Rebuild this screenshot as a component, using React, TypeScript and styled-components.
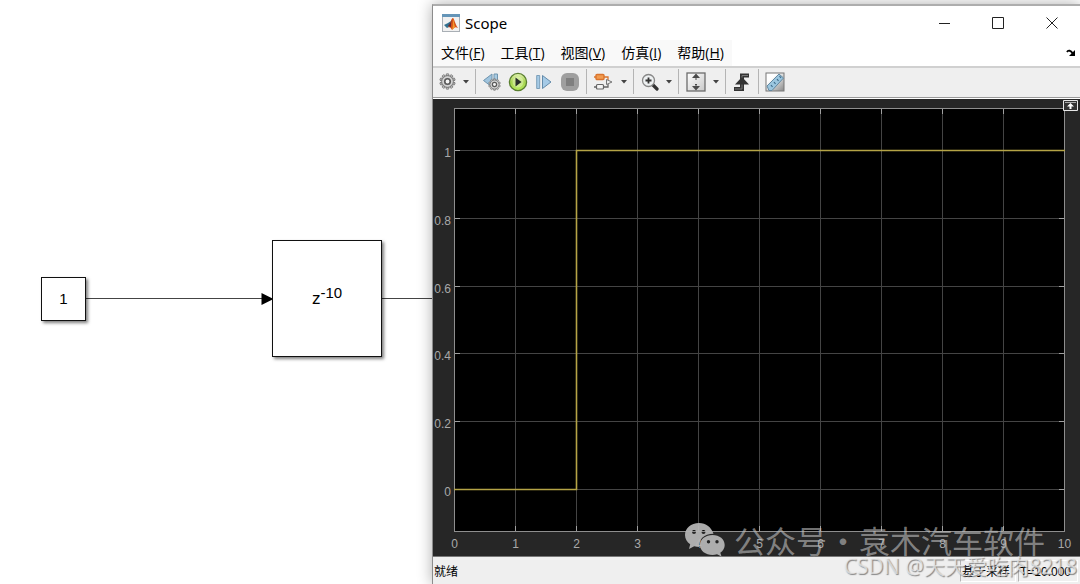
import React from 'react';
import styled, { createGlobalStyle } from 'styled-components';

const uiFont = '"Noto Sans", "Noto Sans CJK SC", sans-serif';
const cjkFont = '"Noto Sans CJK SC", "Noto Sans", sans-serif';

const GlobalStyle = createGlobalStyle`
  * { box-sizing: border-box; }
  body { margin: 0; background: #fff; font-family: ${cjkFont}; color: #000; }
  button { font: inherit; color: inherit; border: 0; padding: 0; background: none; }
`;

const Desktop = styled.main`
  position: relative;
  min-height: 100vh;
  overflow: hidden;
`;

const Block = styled.div<{ $x: number; $y: number; $w: number; $h: number }>`
  position: absolute;
  left: ${p => p.$x}px;
  top: ${p => p.$y}px;
  width: ${p => p.$w}px;
  height: ${p => p.$h}px;
  display: flex;
  align-items: center;
  justify-content: center;
  background: #fff;
  border: 1px solid #111;
  box-shadow: 2px 2px 3px rgba(0, 0, 0, 0.5);
  font: 15px/20px "Liberation Sans", Arial, sans-serif;
`;

const Formula = styled.span`
  font-size: 17px;
  sup { font-size: 15px; line-height: 0; vertical-align: 6px; }
`;

const Wires = styled.svg`
  position: absolute;
  left: 0;
  top: 290px;
`;

const Window = styled.section`
  position: absolute;
  left: 432px;
  right: 0;
  top: 4px;
  min-height: calc(100vh - 4px);
  display: flex;
  flex-direction: column;
  background: #efefef;
  border-left: 1px solid #8c8c8c;
  border-top: 2px solid #adadad;
  box-shadow: 0 0 14px rgba(0, 0, 0, 0.32);
`;

const TitleBar = styled.header`
  display: flex;
  align-items: center;
  height: 34px;
  padding: 0 1px 0 9px;
  background: #fff;
`;

const Title = styled.h1`
  flex: 1;
  margin: 0 0 0 5px;
  font: 400 15px/20px ${uiFont};
`;

const Caption = styled.button`
  width: 54px;
  height: 32px;
  display: grid;
  place-items: center;
`;

const MenuBar = styled.nav`
  display: flex;
  align-items: center;
  justify-content: space-between;
  height: 26px;
  background: #fff;
  padding-right: 4px;
`;

const MenuList = styled.div`
  display: flex;
  align-items: center;
  gap: 16px;
  height: 26px;
  padding: 0 8px;
  background: #f9f9f9;
`;

const MenuButton = styled.button`
  font: 14px/20px "Open Sans", ${cjkFont};
  white-space: nowrap;
`;

const DockButton = styled.button`
  display: grid;
  place-items: center;
  height: 20px;
`;

const Toolbar = styled.div`
  display: flex;
  align-items: center;
  height: 32px;
  padding: 0 0 2px 4px;
  background: #efefef;
  border-top: 2px solid #d0d0d0;
  border-bottom: 1px solid #999;
`;

const Tool = styled.button<{ $w: number }>`
  width: ${p => p.$w}px;
  height: 26px;
  display: grid;
  place-items: center;
`;

const Separator = styled.span<{ $gap?: number }>`
  width: 1px;
  height: 25px;
  margin-left: ${p => p.$gap ?? 0}px;
  background: #b4b4b4;
`;

const ChartArea = styled.div`
  position: relative;
  background: #262626;
  border-top: 1px solid #fff;
  border-bottom: 1px solid #777;
`;

const Chart = styled.svg`
  display: block;
  width: 100%;
  height: auto;
  text { fill: #a9a9a9; font: 12px "Liberation Sans", Arial, sans-serif; }
`;

const AxesButton = styled.button`
  position: absolute;
  top: 1px;
  right: 2px;
  display: flex;
`;

const StatusBar = styled.footer`
  flex: 1;
  display: flex;
  align-items: center;
  justify-content: space-between;
  min-height: 27px;
  padding: 0 2px 0 1px;
  font: 12px/16px ${cjkFont};
`;

const StatusCells = styled.div`
  display: flex;
  gap: 2px;
`;

const StatusCell = styled.span<{ $w: number }>`
  width: ${p => p.$w}px;
  height: 22px;
  padding: 2px 1px;
  border: 1px solid #fff;
  border-left-color: #b4b4b4;
  white-space: nowrap;
`;

const Sampled = styled.span`
  font: 12px/16px "Liberation Sans", sans-serif;
`;

const ChannelMark = styled.div`
  position: absolute;
  right: 35px;
  bottom: 22px;
  display: flex;
  align-items: center;
  gap: 9px;
  color: rgba(190, 190, 190, 0.62);
  font: 400 31px/44px ${cjkFont};
  white-space: nowrap;
  pointer-events: none;
`;

const ChannelText = styled.span`
  display: flex;
  span { width: 32px; text-align: center; }
`;

const AuthorMark = styled.div`
  position: absolute;
  right: 3px;
  bottom: 5px;
  color: rgba(240, 240, 240, 0.7);
  font: 21px/26px ${uiFont};
  text-shadow: 1px 1px 1px rgba(90, 90, 90, 0.7);
  white-space: nowrap;
  pointer-events: none;
`;

const Arrow = () => (
  <svg width="6" height="4" viewBox="0 0 6 4"><path d="M0 0h6L3 3.5z" fill="#444" /></svg>
);

const Matlab = () => (
  <svg width="18" height="18" viewBox="0 0 18 18">
    <rect x=".5" y=".5" width="17" height="17" fill="#f1f1f1" stroke="#a9afb5" />
    <path d="M0 0h18v3H0z" fill="#6595b8" />
    <path d="M2 11l4-2 3-2-2 6-2 1z" fill="#32708f" />
    <path d="M6 13c2-1 3-9 5-9 1 0 2 6 5 10-2-1-3-1-4 0l-2 2c-1-2-2-3-4-3z" fill="#d85218" />
    <path d="M6 12c2-2 3-5 4-7-1 3-1 6-1 8z" fill="#642b35" />
    <path d="M11 5c1 3 1 5 2 8l-3 3c1-3 1-7 1-11z" fill="#f29a2f" />
  </svg>
);

const gearTeeth = Array.from({ length: 10 }, (_, i) => i * 36);

const GearShape = () => (
  <g>
    {gearTeeth.map(a => (
      <path key={a} d="M-1.6-6.2l.5-1.9h2.2l.5 1.9z" transform={`rotate(${a})`} fill="#ccc" stroke="#777" strokeWidth=".9" />
    ))}
    <circle r="6" fill="#c4c4c4" stroke="#777" />
    <circle r="4.900" fill="none" stroke="#e4e4e4" strokeWidth=".8" />
    <circle r="2.900" fill="#f4f4f4" stroke="#5a5a5a" strokeWidth="1.700" />
  </g>
);

const Gear = () => <svg width="17" height="17" viewBox="-9 -9 18 18"><GearShape /></svg>;

const StepBack = () => (
  <svg width="20" height="18" viewBox="0 0 20 18">
    <path d="M10 1v13L1.500 7.500z" fill="#9fc4de" stroke="#6f95af" />
    <path d="M12 1h3.500v9H12z" fill="#a9cbe2" stroke="#6f95af" />
    <g transform="translate(12.500 11.500) scale(.72)"><GearShape /></g>
  </svg>
);

const Run = () => (
  <svg width="20" height="20" viewBox="0 0 20 20">
    <defs>
      <linearGradient id="run" x1="0" y1="0" x2="0" y2="1">
        <stop offset="0" stopColor="#e5f3b4" /><stop offset=".5" stopColor="#a5d44f" /><stop offset="1" stopColor="#b8ec5e" />
      </linearGradient>
    </defs>
    <circle cx="10" cy="10" r="8.600" fill="url(#run)" stroke="#5a7f30" strokeWidth="1.300" />
    <circle cx="10" cy="10" r="5.500" fill="#e5f6bb" opacity=".55" />
    <path d="M7.500 5.500v9l6-4.500z" fill="#292e2b" />
  </svg>
);

const StepForward = () => (
  <svg width="16" height="16" viewBox="0 0 16 16">
    <path d="M.700 1.500h3v13h-3z" fill="#a5cae6" stroke="#7c9fb9" />
    <path d="M6.500 1.500v13l8.500-6.500z" fill="#a5cae6" stroke="#638baa" />
  </svg>
);

const Stop = () => (
  <svg width="18" height="18" viewBox="0 0 18 18">
    <rect width="18" height="18" rx="6" fill="#9f9f9f" />
    <rect x="5" y="5" width="8" height="8" fill="#7f7f7f" />
  </svg>
);

const Highlight = () => (
  <svg width="20" height="18" viewBox="0 0 20 18">
    <rect x="2" y="1.500" width="8" height="5" rx="1" fill="#f29c50" stroke="#d9742e" strokeWidth="1.400" />
    <path d="M0 4h2M10 4h4v3" fill="none" stroke="#d9742e" strokeWidth="1.300" />
    <path d="M0 14h2m8 0h4v-3" fill="none" stroke="#666" strokeWidth="1.300" />
    <rect x="2.500" y="11.500" width="7" height="4.500" rx="1" fill="#f4f4f4" stroke="#666" strokeWidth="1.200" />
    <path d="M12.500 6.500l5.500 2.500-5.500 2.500z" fill="#eee" stroke="#777" />
  </svg>
);

const Zoom = () => (
  <svg width="18" height="18" viewBox="0 0 18 18">
    <path d="M11.500 11.500l4.500 4.500" stroke="#333" strokeWidth="3.200" strokeLinecap="round" />
    <circle cx="7.500" cy="7.500" r="6" fill="#eef1f2" stroke="#888" strokeWidth="1.300" />
    <path d="M4.500 7.500h6m-3-3v6" stroke="#333" strokeWidth="1.800" />
  </svg>
);

const Fit = () => (
  <svg width="20" height="20" viewBox="0 0 20 20">
    <defs><linearGradient id="fit" x1="0" y1="0" x2="1" y2="1"><stop offset="0" stopColor="#fff" /><stop offset="1" stopColor="#c9c9c9" /></linearGradient></defs>
    <rect x="1" y="1" width="18" height="18" fill="url(#fit)" stroke="#6c6c6c" strokeWidth="1.300" />
    <path d="M10 1.500L6 6h8zM10 18.500L6 14h8z" fill="#4a4a4a" />
    <path d="M10 5v3m0 4v3" stroke="#4a4a4a" strokeWidth="2" strokeDasharray="1.500 1" />
  </svg>
);

const Trigger = () => (
  <svg width="18" height="20" viewBox="0 0 18 20">
    <path d="M1 17h8V3.500h7" fill="none" stroke="#333" strokeWidth="4" />
    <path d="M2 17h7V3.500h6" fill="none" stroke="#777" strokeWidth="1" />
    <path d="M9 5l7 7.500H2z" fill="#333" />
  </svg>
);

const Ruler = () => (
  <svg width="20" height="20" viewBox="0 0 20 20">
    <defs><linearGradient id="page" x1="0" y1="0" x2="1" y2="1"><stop offset=".3" stopColor="#fff" /><stop offset="1" stopColor="#888" /></linearGradient></defs>
    <rect x="1" y="1" width="18" height="18" fill="url(#page)" stroke="#777" />
    <path d="M2 14L14 2l4.500 4L7 18.500H4z" fill="#9bc6df" stroke="#6388a0" />
    <path d="M7.500 15L6 13M10.500 12L9 10M13.500 9L12 7M16 6l-1.500-2" stroke="#3f6d8c" strokeWidth="1.200" />
  </svg>
);

const WeChat = () => (
  <svg width="41" height="34" viewBox="0 0 41 34">
    <path fillRule="evenodd" fill="#b4b4b4" fillOpacity=".95" d="M15 0C7 0 1 5.200 1 12c0 3.700 2 7 5.200 9.300L5 26l5.200-2.800c1.700.500 3.300.700 5 .700C14.500 16.500 20 11 29.500 10.800 27.500 4.500 22 0 15 0zM10 7a2 2 0 110 4 2 2 0 010-4zm9.500 0a2 2 0 110 4 2 2 0 010-4z" />
    <path fillRule="evenodd" fill="#b4b4b4" fillOpacity=".95" d="M28.500 12C21.500 12 16 16.300 16 22s5.500 10 12.500 10c1.600 0 3.100-.200 4.500-.700l4.500 2.200-1.200-3.700c2.800-1.900 4.400-4.700 4.400-7.800 0-5.700-5.200-10-12.200-10zM24.500 17a1.700 1.700 0 110 3.400 1.700 1.700 0 010-3.400zm8.500 0a1.700 1.700 0 110 3.400 1.700 1.700 0 010-3.400z" />
  </svg>
);

const menus = [
  ['文件', 'F'], ['工具', 'T'], ['视图', 'V'], ['仿真', 'I'], ['帮助', 'H'],
];

const xTicks = Array.from({ length: 11 }, (_, i) => i);
const yTicks = [0, 0.2, 0.4, 0.6, 0.8, 1];
const px = (v: number) => Math.round(21 + v * 61) + 0.5;
const py = (v: number) => Math.round(390 - v * 339) + 0.5;

const ScopeChart = () => (
  <Chart viewBox="0 0 647 457" role="img" aria-label="Scope">
    <rect x="21" y="9" width="611" height="424" fill="#000" />
    {xTicks.map(v => (
      <g key={v}>
        <path d={`M${px(v)} 9V433`} stroke="#444" />
        <path d={`M${px(v)} 9v6M${px(v)} 433v-6`} stroke="#a0a0a0" />
        <text x={px(v)} y="449" textAnchor="middle">{v}</text>
      </g>
    ))}
    {yTicks.map(v => (
      <g key={v}>
        <path d={`M21 ${py(v)}H632`} stroke="#444" />
        <path d={`M21 ${py(v)}h6M632 ${py(v)}h-6`} stroke="#a0a0a0" />
        <text x="18" y={py(v) + 6} textAnchor="end">{v}</text>
      </g>
    ))}
    <rect x="21.500" y="9.500" width="610" height="423" fill="none" stroke="#8e8e8e" />
    <path d={`M21 ${py(0)}H${px(2)}V${py(1)}H632`} fill="none" stroke="#b5a446" strokeWidth="1.600" />
  </Chart>
);

export default function App() {
  return (
    <Desktop>
      <GlobalStyle />
      <Wires width="440" height="18" viewBox="0 0 440 18">
        <path d="M86 8.500H262M382 8.500H440" stroke="#444" />
        <path d="M261.500 3v12l12-6z" fill="#000" />
      </Wires>
      <Block $x={41} $y={277} $w={45} $h={44}>1</Block>
      <Block $x={272} $y={240} $w={110} $h={117}><Formula>z<sup>-10</sup></Formula></Block>

      <Window>
        <TitleBar>
          <Matlab />
          <Title>Scope</Title>
          <Caption aria-label="Minimize"><svg width="11" height="11"><path d="M0 5.500h11" stroke="#222" /></svg></Caption>
          <Caption aria-label="Maximize"><svg width="12" height="12"><path d="M.5.5h11v11H.5z" fill="none" stroke="#222" /></svg></Caption>
          <Caption aria-label="Close"><svg width="12" height="12"><path d="M.5.5l11 11m0-11l-11 11" stroke="#222" /></svg></Caption>
        </TitleBar>
        <MenuBar>
          <MenuList>
            {menus.map(([label, key]) => (
              <MenuButton key={key}>{label}(<u>{key}</u>)</MenuButton>
            ))}
          </MenuList>
          <DockButton aria-label="Undock">
            <svg width="10" height="8" viewBox="0 0 10 8"><path d="M1 3c1-2 4-2 6 2" fill="none" stroke="#000" strokeWidth="1.800" /><path d="M9 1v6H3z" fill="#000" /></svg>
          </DockButton>
        </MenuBar>
        <Toolbar>
          <Tool $w={20} aria-label="Settings"><Gear /></Tool>
          <Tool $w={18} aria-label="Settings menu"><Arrow /></Tool>
          <Separator />
          <Tool $w={32} aria-label="Step back"><StepBack /></Tool>
          <Tool $w={20} aria-label="Run"><Run /></Tool>
          <Tool $w={32} aria-label="Step forward"><StepForward /></Tool>
          <Tool $w={20} aria-label="Stop"><Stop /></Tool>
          <Separator $gap={6} />
          <Tool $w={34} aria-label="Highlight block"><Highlight /></Tool>
          <Tool $w={6} aria-label="Highlight menu"><Arrow /></Tool>
          <Separator $gap={6} />
          <Tool $w={32} aria-label="Zoom"><Zoom /></Tool>
          <Tool $w={6} aria-label="Zoom menu"><Arrow /></Tool>
          <Separator $gap={6} />
          <Tool $w={34} aria-label="Fit to view"><Fit /></Tool>
          <Tool $w={6} aria-label="Fit menu"><Arrow /></Tool>
          <Separator $gap={6} />
          <Tool $w={32} aria-label="Triggers"><Trigger /></Tool>
          <Separator />
          <Tool $w={32} aria-label="Measurements"><Ruler /></Tool>
        </Toolbar>
        <ChartArea>
          <ScopeChart />
          <AxesButton aria-label="Maximize axes">
            <svg width="15" height="11" viewBox="0 0 15 11"><path d="M.500.500h14v10H.500z" fill="#333" stroke="#e8e8e8" /><path d="M2 2.500h11" stroke="#aaa" /><path d="M7.500 3l3.500 3.500H8.500V9h-2V6.500H4z" fill="#fff" /></svg>
          </AxesButton>
        </ChartArea>
        <StatusBar>
          <span>就绪</span>
          <StatusCells>
            <StatusCell $w={56}>基于采样</StatusCell>
            <StatusCell $w={60}><Sampled>T=10.000</Sampled></StatusCell>
          </StatusCells>
        </StatusBar>
        <ChannelMark>
          <WeChat />
          <ChannelText>公众号<span>·</span>袁木汽车软件</ChannelText>
        </ChannelMark>
        <AuthorMark>CSDN @天天爱吃肉8218</AuthorMark>
      </Window>
    </Desktop>
  );
}
